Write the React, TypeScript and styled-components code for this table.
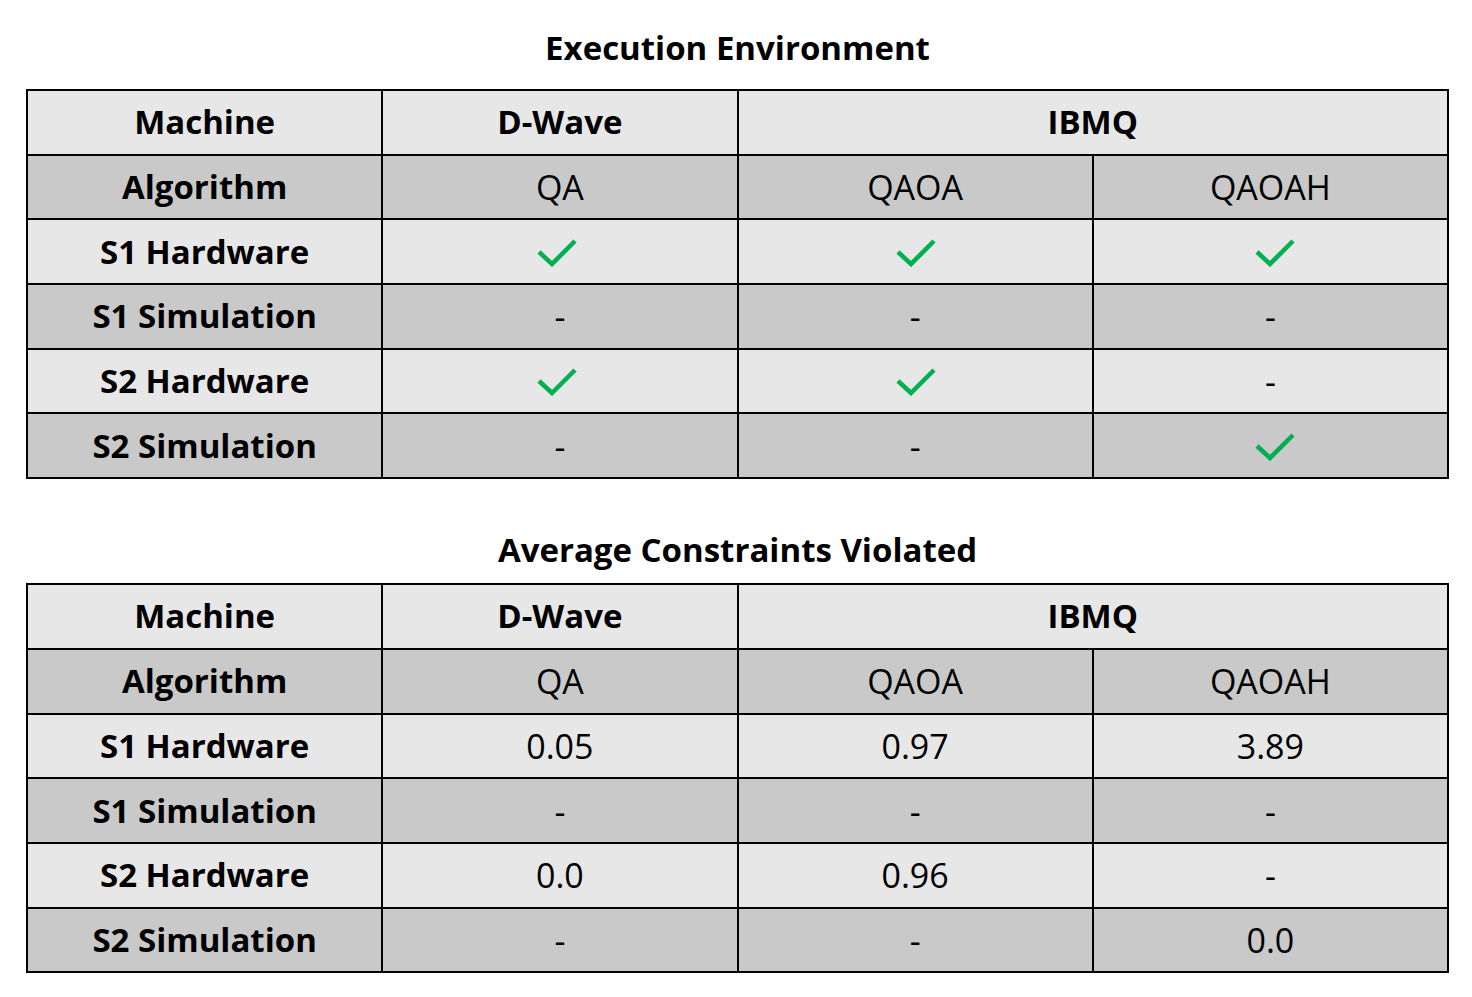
import { createGlobalStyle } from "styled-components";
import styled from "styled-components";

const GlobalStyle = createGlobalStyle`
  html, body {
    margin: 0;
    padding: 0;
    background: #ffffff;
  }
  body {
    font-family: "Open Sans", Lato, "Liberation Sans", sans-serif;
    color: #000;
  }
`;

const Page = styled.div`
  width: 1472px;
  padding: 28px 0 0 26px;
  box-sizing: border-box;
`;

const Section = styled.section`
  width: 1423px;
  margin-bottom: 51px;
`;

const Title = styled.h2<{ $gap: number }>`
  margin: 0 0 ${(p) => p.$gap}px;
  height: 40px;
  line-height: 40px;
  text-align: center;
  font-size: 33px;
  font-weight: 700;
`;

const Table = styled.table`
  width: 1423px;
  border-collapse: collapse;
  table-layout: fixed;
  border: 2px solid #000;
`;

const Row = styled.tr<{ $dark?: boolean }>`
  height: 64.7px;
  background: ${(p) => (p.$dark ? "#c9c9c9" : "#e7e7e7")};
`;

const Cell = styled.td<{ $bold?: boolean }>`
  border: 2px solid #000;
  padding: 0;
  text-align: center;
  vertical-align: middle;
  font-size: ${(p) => (p.$bold ? 33 : 34)}px;
  line-height: 40px;
  font-weight: ${(p) => (p.$bold ? 700 : 400)};
`;

const CheckIcon = styled.svg<{ $shift: number }>`
  display: block;
  margin: 0 auto;
  position: relative;
  left: ${(p) => p.$shift}px;
`;

const shifts = [-3, 1, 5];

const Check = ({ col }: { col: number }) => (
  <CheckIcon $shift={shifts[col]} width="42" height="30" viewBox="0 0 42 30">
    <polyline points="3,15 16,27 39,4" fill="none" stroke="#00b050" strokeWidth="4.5" />
  </CheckIcon>
);

type Val = string | "check";

interface TableData {
  title: string;
  gap: number;
  rows: { label: string; values: Val[] }[];
}

const tables: TableData[] = [
  {
    title: "Execution Environment",
    gap: 21,
    rows: [
      { label: "S1 Hardware", values: ["check", "check", "check"] },
      { label: "S1 Simulation", values: ["-", "-", "-"] },
      { label: "S2 Hardware", values: ["check", "check", "-"] },
      { label: "S2 Simulation", values: ["-", "-", "check"] },
    ],
  },
  {
    title: "Average Constraints Violated",
    gap: 13,
    rows: [
      { label: "S1 Hardware", values: ["0.05", "0.97", "3.89"] },
      { label: "S1 Simulation", values: ["-", "-", "-"] },
      { label: "S2 Hardware", values: ["0.0", "0.96", "-"] },
      { label: "S2 Simulation", values: ["-", "-", "0.0"] },
    ],
  },
];

function ResultTable({ data }: { data: TableData }) {
  return (
    <Section>
      <Title $gap={data.gap}>{data.title}</Title>
      <Table>
        <colgroup>
          <col />
          <col />
          <col />
          <col />
        </colgroup>
        <tbody>
          <Row>
            <Cell $bold>Machine</Cell>
            <Cell $bold>D-Wave</Cell>
            <Cell $bold colSpan={2}>
              IBMQ
            </Cell>
          </Row>
          <Row $dark>
            <Cell $bold>Algorithm</Cell>
            <Cell>QA</Cell>
            <Cell>QAOA</Cell>
            <Cell>QAOAH</Cell>
          </Row>
          {data.rows.map((r, i) => (
            <Row key={r.label} $dark={i % 2 === 1}>
              <Cell $bold>{r.label}</Cell>
              {r.values.map((v, j) => (
                <Cell key={j}>{v === "check" ? <Check col={j} /> : v}</Cell>
              ))}
            </Row>
          ))}
        </tbody>
      </Table>
    </Section>
  );
}

export default function App() {
  return (
    <Page>
      <GlobalStyle />
      {tables.map((t) => (
        <ResultTable key={t.title} data={t} />
      ))}
    </Page>
  );
}
